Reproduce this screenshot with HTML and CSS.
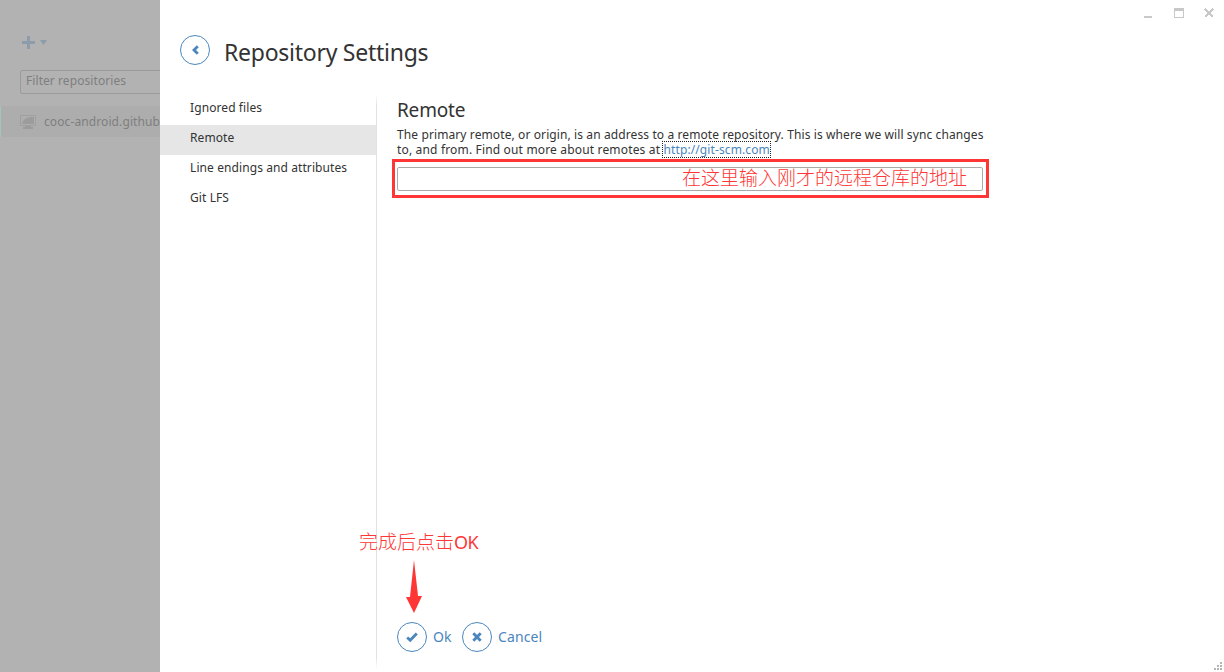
FILE: index.html
```html
<!DOCTYPE html>
<html lang="en">
<head>
<meta charset="utf-8">
<title>Repository Settings</title>
<link rel="stylesheet" href="styles.css">
</head>
<body>
<div class="window">
  <aside class="sidebar">
    <div class="add">
      <svg width="26" height="13" viewBox="0 0 26 13"><path d="M5 0h3v5h5v3H8v5H5V8H0V5h5z"/><path d="M18 4h7l-3.5 5z"/></svg>
    </div>
    <div class="filter"><span class="filter-text">Filter repositories</span></div>
    <div class="repo">
      <svg class="monitor" width="16" height="14" viewBox="0 0 16 14"><path class="frame" d="M.5.5h15v10H.5z"/><path d="M2 9Q3 3 11 2h3v7zM5 11h6v1h2v2H3v-2h2z"/></svg>
      <span class="repo-name">cooc-android.github</span>
    </div>
  </aside>
  <main class="main">
    <header class="header">
      <button class="round" aria-label="Back"><svg width="30" height="30" viewBox="0 0 30 30"><circle cx="15" cy="15" r="14.5"/><path class="stroke" d="M17.8 11.2L14 15l3.8 3.8"/></svg></button>
      <h1 class="title">Repository Settings</h1>
      <svg class="controls" width="72" height="12" viewBox="0 0 72 12" shape-rendering="crispEdges"><path d="M0 8h8v2H0zM30 0h10v10H30zM31 3v6h8V3z" fill-rule="evenodd"/><path class="close" d="M61 1l8 8M69 1l-8 8"/></svg>
    </header>
    <div class="body">
      <nav class="nav">
        <a class="item">Ignored files</a>
        <a class="item active">Remote</a>
        <a class="item">Line endings and attributes</a>
        <a class="item">Git LFS</a>
      </nav>
      <section class="content">
        <h2 class="subtitle">Remote</h2>
        <p class="desc"><span class="d1">The primary remote, or origin, is an address to a remote repository. This is where we will sync changes</span><br><span class="d2">to, and from. Find out more about remotes at </span><a class="link">http://git-scm.com</a></p>
        <div class="field"></div>
        <div class="actions">
          <button class="round" aria-label="Ok"><svg width="30" height="30" viewBox="0 0 30 30"><circle cx="15" cy="15" r="14.5"/><path class="stroke" d="M10.2 15.5l3 2.8 6.6-6.8"/></svg></button>
          <span class="label ok">Ok</span>
          <button class="round" aria-label="Cancel"><svg width="30" height="30" viewBox="0 0 30 30"><circle cx="15" cy="15" r="14.5"/><path class="stroke" d="M11.3 11.3l7.4 7.4M18.7 11.3l-7.4 7.4"/></svg></button>
          <span class="label cancel">Cancel</span>
        </div>
      </section>
    </div>
  </main>
  <div class="mark-box"></div>
  <span class="mark mark-url">在这里输入刚才的远程仓库的地址</span>
  <span class="mark mark-ok">完成后点击<span class="mark-latin">OK</span></span>
  <svg class="arrow" width="16" height="53" viewBox="0 0 16 53"><path d="M8 0l4 36h4L8 53 0 37h4z"/></svg>
  <svg class="grip" width="9" height="9" viewBox="0 0 9 9" shape-rendering="crispEdges"><path d="M6 0h2v2H6zM3 3h2v2H3zM6 3h2v2H6zM0 6h2v2H0zM3 6h2v2H3zM6 6h2v2H6z"/></svg>
</div>
</body>
</html>
```
FILE: styles.css
```css
* { box-sizing: border-box; }
body { margin: 0; font-family: "Noto Sans", "Noto Sans CJK SC", sans-serif; font-size: 12px; color: #333; background: #fff; }
svg { display: block; }
.window { position: relative; display: flex; width: 1224px; height: 672px; overflow: hidden; }
.sidebar { width: 160px; height: 672px; background: #b2b2b2; overflow: hidden; padding-top: 36px; color: #7f7f7f; white-space: nowrap; }
.add { height: 34px; padding-left: 22px; fill: #8c9cab; }
.filter { width: 200px; height: 24px; margin-left: 20px; padding-left: 5px; border: 1px solid #9a9a9a; border-radius: 2px; line-height: 20px; letter-spacing: 0.07px; }
.repo { display: flex; align-items: center; gap: 8px; height: 31px; margin-top: 12px; padding-left: 19px; border-left: 1px solid #a3c3bf; background: #adadad; line-height: 31px; letter-spacing: 0.1px; }
.monitor { flex: none; fill: #9c9c9c; }
.monitor .frame { fill: none; stroke: #a0a0a0; }
.main { flex: 1; display: flex; flex-direction: column; }
.header { display: flex; height: 97px; padding: 8px 10px 0 20px; }
.round { flex: none; width: 30px; height: 30px; padding: 0; border: 0; background: none; }
.round circle { fill: none; stroke: #4a86bd; }
.stroke { fill: none; stroke: #4a86bd; stroke-width: 2.8; }
.header .round { margin-top: 27px; }
.title { flex: 1; margin: 27px 0 0 14px; font-size: 23px; font-weight: 400; line-height: 34px; letter-spacing: -0.26px; }
.controls { fill: #c8c8c8; margin-right: -2px; }
.close { stroke: #c8c8c8; stroke-width: 2; }
.body { flex: 1; display: flex; }
.nav { width: 217px; height: 573px; margin-top: -2px; border-right: 1px solid; border-image: linear-gradient(transparent, #e1e1e1 12px, #e1e1e1 calc(100% - 12px), transparent) 1; }
.item { display: block; height: 30px; padding-left: 30px; line-height: 25px; letter-spacing: 0.09px; }
.active { background: #e6e6e6; }
.content { display: flex; flex-direction: column; width: 606px; height: 555px; padding-left: 20px; }
.subtitle { margin: 0; font-size: 19px; font-weight: 400; line-height: 27px; letter-spacing: -0.2px; }
.desc { margin: 3px 0 0; line-height: 15px; white-space: nowrap; }
.d1 { letter-spacing: 0.105px; }
.d2 { letter-spacing: 0.165px; }
.link { display: inline-block; height: 15px; color: #4a86bd; outline: 1px dotted #222; letter-spacing: 0.11px; }
.field { width: 586px; height: 24px; margin-top: 10px; border: 1px solid #aaa; border-radius: 2px; }
.actions { display: flex; align-items: center; margin-top: auto; color: #4a86bd; font-size: 14px; }
.label { margin-left: 6px; line-height: 30px; }
.ok { width: 29px; }
.cancel { letter-spacing: 0.1px; }
.mark-box { position: absolute; left: 392px; top: 159px; width: 597px; height: 39px; border: 3px solid #ff3636; }
.mark { position: absolute; color: #ff3636; font-family: "Noto Sans CJK SC", sans-serif; font-weight: 300; font-size: 19px; line-height: 24px; white-space: nowrap; }
.mark-url { left: 682px; top: 165px; }
.mark-ok { left: 359px; top: 529px; }
.mark-latin { font-family: "Noto Sans", sans-serif; font-weight: 400; font-size: 18px; letter-spacing: -0.6px; }
.arrow { position: absolute; left: 406px; top: 560px; fill: #ff3636; }
.grip { position: absolute; left: 1214px; top: 662px; fill: #b5b5b5; }
```
